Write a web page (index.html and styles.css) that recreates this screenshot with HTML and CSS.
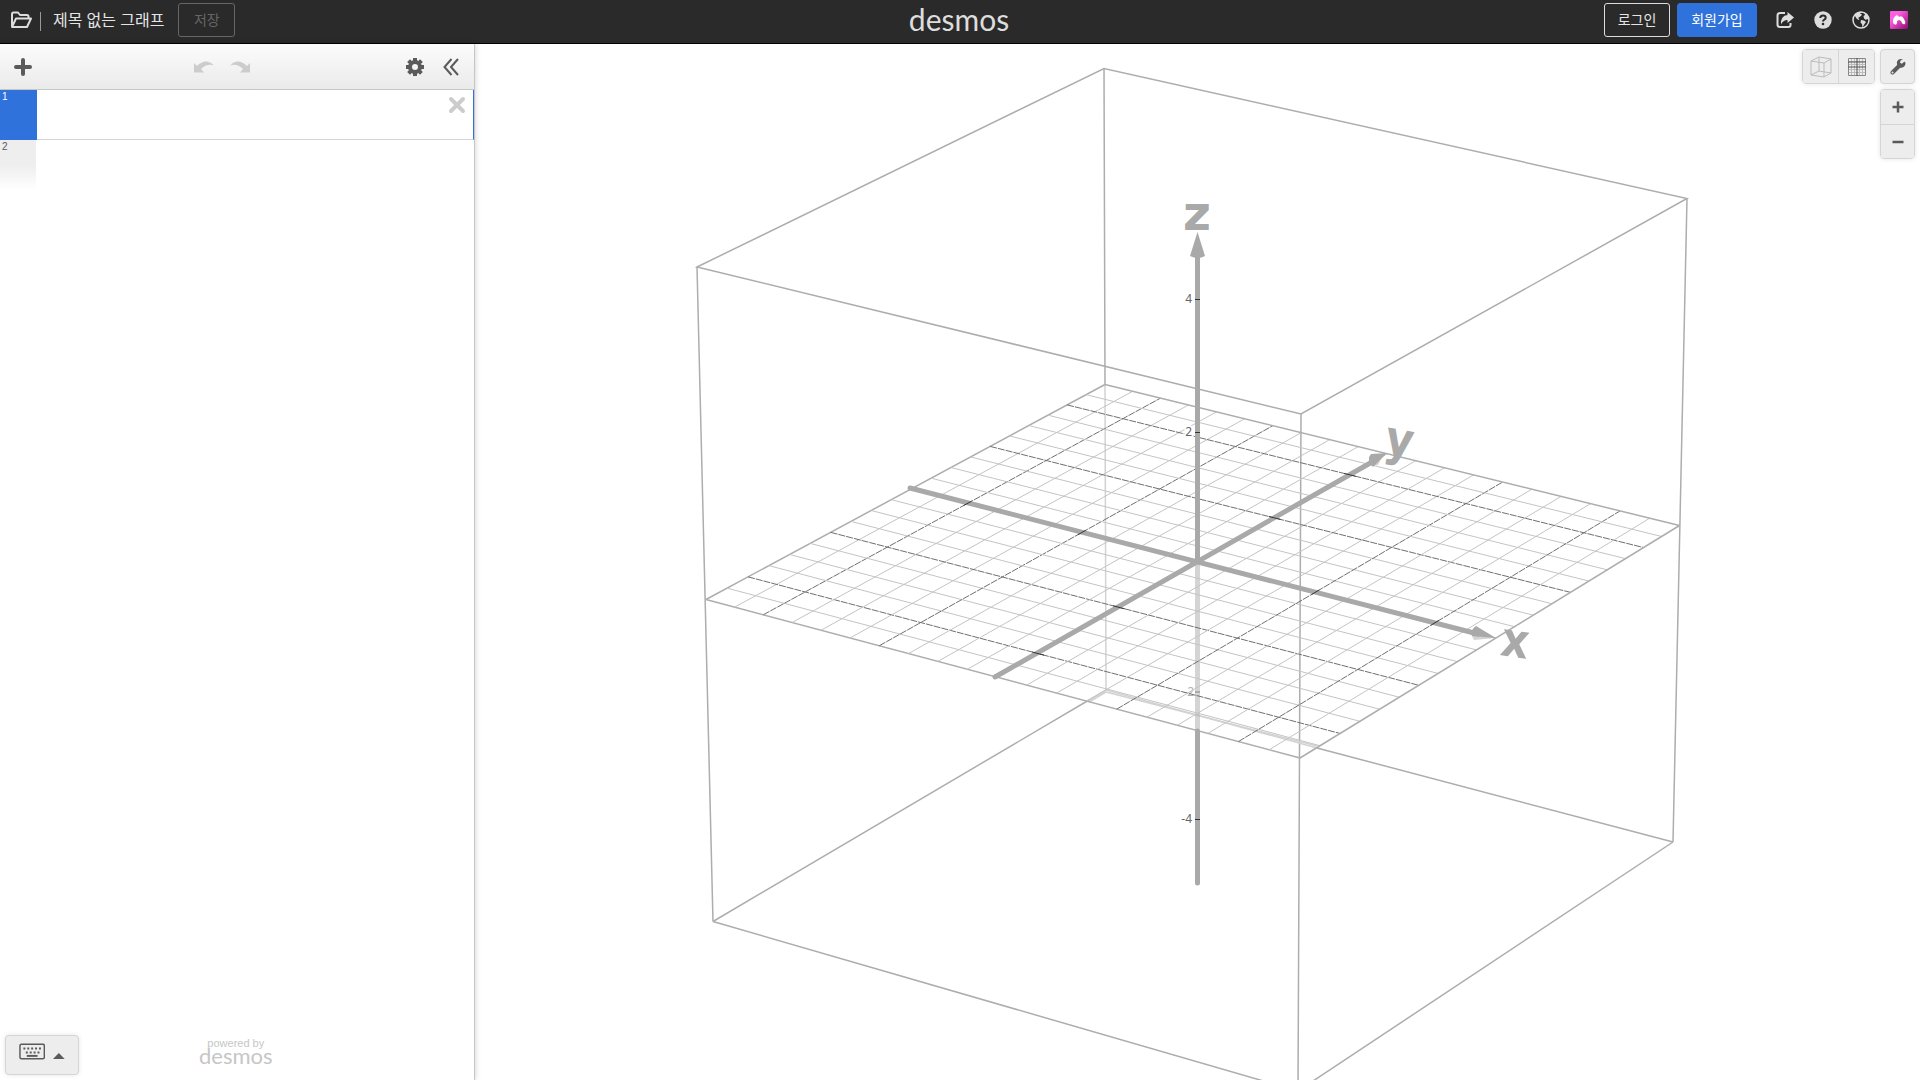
FILE: index.html
```
<!DOCTYPE html>
<html lang="ko">
<head>
    <meta charset="utf-8">
    <meta name="viewport" content="width=device-width, initial-scale=1">
    <title>Desmos | 3D</title>
    <link rel="stylesheet" href="styles.css">
</head>
<body>
    <header class="header">
        <div class="header-side">
            <button class="icon-btn open-btn" aria-label="그래프 열기">
                <svg width="22" height="18" viewBox="0 0 22 18" fill="none" stroke="#ddd" stroke-width="2" stroke-linejoin="round">
                    <path d="M2 15V3q0-1.500 1.500-1.500H8L10 4h7q1.500 0 1.500 1.500V7"/>
                    <path d="M2 16L6 7.500h15L17 16z"/>
                </svg>
            </button>
            <span class="divider"></span>
            <span class="graph-title">제목 없는 그래프</span>
            <button class="btn save-btn" disabled>저장</button>
        </div>
        <a class="logo" href="#">desmos</a>
        <div class="header-side header-right">
            <button class="btn login-btn">로그인</button>
            <button class="btn signup-btn">회원가입</button>
            <div class="header-icons">
                <button class="icon-btn" aria-label="공유">
                    <svg width="18" height="18" viewBox="0 0 18 18">
                        <path d="M9 2H4Q1.500 2 1.500 4.500v9Q1.500 16 4 16h8.500q2 0 2-2v-2" fill="none" stroke="#ddd" stroke-width="2"/>
                        <path d="M11.500 1L18 6.500 11.500 12V9Q7 9 5 13.500 4.500 4.500 11.500 4z" fill="#ddd"/>
                    </svg>
                </button>
                <button class="icon-btn" aria-label="도움말">
                    <svg width="18" height="18" viewBox="0 0 18 18">
                        <circle cx="9" cy="9" r="8.700" fill="#ddd"/>
                        <path d="M6.300 7q0-2.600 2.700-2.600T11.700 6.700Q11.700 8 10.300 8.700 9 9.300 9 10.600" fill="none" stroke="#2a2a2a" stroke-width="2"/>
                        <circle cx="9" cy="13" r="1.300" fill="#2a2a2a"/>
                    </svg>
                </button>
                <button class="icon-btn" aria-label="언어">
                    <svg width="18" height="18" viewBox="0 0 18 18">
                        <circle cx="9" cy="9" r="8" fill="none" stroke="#ddd" stroke-width="1.500"/>
                        <path d="M3 3Q6 0 10 1L8 2.500l2 1L9 5 7.500 6 6 7l1.500 1.200L6.500 9 4.500 7.500 3 5zM12 1l3.500 3 1.500 5-2-1-1 1-2-1.500L11.500 5l1.500-1zM9 9l3 .5 2 1.500-1.500 2-2 3.500L10 13 8.500 11.500z" fill="#ddd"/>
                    </svg>
                </button>
                <button class="icon-btn" aria-label="계정">
                    <svg width="18" height="18" viewBox="0 0 18 18">
                        <defs>
                            <linearGradient id="pink" x1="0" y1="0" x2="1" y2="1">
                                <stop offset="0.300" stop-color="#ff5ee0"/>
                                <stop offset="1" stop-color="#8c0a70"/>
                            </linearGradient>
                        </defs>
                        <rect width="18" height="18" rx="1" fill="url(#pink)"/>
                        <path d="M3.500 13Q2 8 5 5.500 7.500 3 9 6q3-2 5 2 2 3 1 5-2 1-3-1l-1-2-2-1-2 1v2q-1 3-3.500.5z" fill="#fff"/>
                    </svg>
                </button>
            </div>
        </div>
    </header>
    <main class="main">
        <aside class="sidebar">
            <div class="toolbar">
                <button class="icon-btn" aria-label="추가">
                    <svg width="18" height="18" viewBox="0 0 18 18" stroke="#5a5a5a" stroke-width="4" stroke-linecap="round">
                        <path d="M9 2v14M2 9h14"/>
                    </svg>
                </button>
                <div class="history">
                    <button class="icon-btn" aria-label="실행 취소" disabled>
                        <svg width="20" height="12" viewBox="0 0 20 12" fill="#ccc">
                            <path d="M0 2l3 3Q8 0 13 .5q4 .5 7 4Q13 2 7 8l3 3.500H0z"/>
                        </svg>
                    </button>
                    <button class="icon-btn" aria-label="다시 실행" disabled>
                        <svg width="20" height="12" viewBox="0 0 20 12" fill="#ccc">
                            <path d="M20 2l-3 3Q12 0 7 .5q-4 .5-7 4Q7 2 13 8l-3 3.500h10z"/>
                        </svg>
                    </button>
                </div>
                <div class="toolbar-right">
                    <button class="icon-btn" aria-label="설정">
                        <svg width="18" height="18" viewBox="0 0 18 18" fill="none" stroke="#5a5a5a">
                            <circle cx="9" cy="9" r="5" stroke-width="4"/>
                            <path d="M9 0v3M9 15v3M0 9h3M15 9h3M2.600 2.600l2 2M13.400 13.400l2 2M2.600 15.400l2-2M13.400 4.600l2-2" stroke-width="4"/>
                        </svg>
                    </button>
                    <button class="icon-btn" aria-label="목록 숨기기">
                        <svg width="16" height="18" viewBox="0 0 16 18" fill="none" stroke="#5a5a5a" stroke-width="2">
                            <path d="M8.500 1L1.500 9l7 8M15 1L8 9l7 8"/>
                        </svg>
                    </button>
                </div>
            </div>
            <div class="expression active">
                <label class="expression-tab" for="expression-1">1</label>
                <input class="expression-input" id="expression-1" type="text">
                <button class="icon-btn delete-btn" aria-label="삭제">
                    <svg width="18" height="18" viewBox="0 0 18 18" stroke="#ccc" stroke-width="4" stroke-linecap="round">
                        <path d="M3 3l12 12M15 3L3 15"/>
                    </svg>
                </button>
            </div>
            <div class="expression next">
                <span class="expression-tab">2</span>
            </div>
            <div class="sidebar-bottom">
                <button class="keypad-btn" aria-label="키패드 열기">
                    <svg width="27" height="18" viewBox="0 0 27 18" fill="none" stroke="#5a5a5a">
                        <rect x="1" y="1" width="25" height="15" rx="1.500" stroke-width="1.500"/>
                        <path d="M4.500 5.500h19M7 9.500h14" stroke-width="2" stroke-dasharray="2 2"/>
                        <path d="M8 13h11" stroke-width="2"/>
                    </svg>
                    <svg class="caret" width="12" height="6" viewBox="0 0 12 6" fill="#5a5a5a"><path d="M0 6l6-6 6 6z"/></svg>
                </button>
                <div class="powered-by">
                    <span>powered by</span>
                    <span class="powered-logo">desmos</span>
                </div>
            </div>
        </aside>
        <section class="graph">
            <svg class="scene" id="scene" viewBox="475 44 1445 1036" preserveAspectRatio="xMidYMid slice">
                <g class="box-edge">
                    <path d="M697 267L1104 68.500 1687 198.500 1301 414z"/>
                    <path d="M697 267L713 921.500M1687 198.500L1673 842M1301 414L1298 1091M1104 68.500L1105 384"/>
                    <path d="M713 921.500L1298 1091 1673 842"/>
                    <path d="M713 921.500L1089 700M1317 748L1673 842"/>
                </g>
                <g class="box-edge hidden-edge">
                    <path d="M1105 384L1106 690"/>
                    <path d="M1089 700L1106 690 1317 748M1089 702L1106 692"/>
                    <path d="M1106 692L1317 746"/>
                </g>
                <path class="axis axis-hidden" d="M1197.500 561V731"/>
                <path class="tick axis-hidden" d="M1195 692h5"/>
                <text class="tick-label axis-hidden" x="1194" y="696" text-anchor="end">-2</text>
                <g id="grid"></g>
                <g class="axis-shade">
                    <path d="M1481 634l14 4-21 2-3-6zM1370 459l12-2-4 8-8 0z"/>
                </g>
                <path class="axis" d="M910 488L1478 634M995 677L1372 462M1197.500 256V561M1197.500 731V883"/>
                <path class="arrow" d="M1197.500 232L1205 256Q1198 260 1190 256zM1496 638L1476 626Q1470 630 1472 636zM1387 453L1371 454Q1366 460 1373 467z"/>
                <g id="ticks"></g>
                <path class="tick" d="M1195 299.500h5M1195 432.500h5M1195 819.500h5"/>
                <g class="tick-label" text-anchor="end">
                    <text x="1192" y="303">4</text>
                    <text class="haloed" x="1192" y="436">2</text>
                    <text x="1192" y="823">-4</text>
                </g>
                <g class="axis-name" text-anchor="middle">
                    <text x="1197" y="230">z</text>
                    <text class="slim" x="1399" y="456" transform="rotate(10 1399 444)">y</text>
                    <text class="slim" x="1515" y="657" transform="rotate(8 1515 643)">x</text>
                </g>
            </svg>
            <div class="graph-controls">
                <div class="view-toggle">
                    <button class="control" aria-label="3D 보기">
                        <svg width="22" height="22" viewBox="0 0 22 22" fill="none" stroke="#bbb">
                            <path d="M1 5L14 7 21 3 9 1zM1 5v14l13 2V7M14 21l7-4V3M9 1v14L1 19M9 15l12 2"/>
                        </svg>
                    </button>
                    <button class="control" aria-label="xy 평면 보기">
                        <svg width="18" height="18" viewBox="0 0 18 18" fill="none">
                            <path d="M3.500 0v18M6.500 0v18M11.500 0v18M14.500 0v18M0 3.500h18M0 6.500h18M0 11.500h18M0 14.500h18" stroke="#bbb"/>
                            <path d="M.5.5h17v17H.5z" stroke="#888"/>
                            <path d="M9 0v18M0 9h18M0 4h18" stroke="#555"/>
                        </svg>
                    </button>
                </div>
                <div class="control-column">
                    <button class="control single" aria-label="그래프 설정">
                        <svg width="16" height="16" viewBox="0 0 16 16">
                            <path d="M2.500 13.500L10 6" stroke="#5a5a5a" stroke-width="4" stroke-linecap="round"/>
                            <path d="M14.500 2.500L11.500 5 10 4 10.500 1.500 13 .5Q9 -1 7 2.500 6.500 5 8 7.500 10 9.500 12.500 8.500 15.500 7 15.500 4z" fill="#5a5a5a"/>
                            <circle cx="2.500" cy="13.500" r="1" fill="#ededed"/>
                        </svg>
                    </button>
                    <div class="zoom">
                        <button class="control" aria-label="확대">
                            <svg width="12" height="12" viewBox="0 0 12 12" stroke="#5a5a5a" stroke-width="2.500"><path d="M6 .5v11M.5 6h11"/></svg>
                        </button>
                        <button class="control" aria-label="축소">
                            <svg width="12" height="12" viewBox="0 0 12 12" stroke="#5a5a5a" stroke-width="2.500"><path d="M.5 6h11"/></svg>
                        </button>
                    </div>
                </div>
            </div>
        </section>
    </main>
    <script src="grid.js"></script>
</body>
</html>
```
FILE: styles.css
```
* {
    box-sizing: border-box;
}

body {
    margin: 0;
    height: 100vh;
    display: flex;
    flex-direction: column;
    overflow: hidden;
    background: #ffffff;
    font-family: "Noto Sans", "Noto Sans CJK KR", sans-serif;
    color: #5a5a5a;
}

button {
    font-family: inherit;
    cursor: pointer;
}

button:disabled {
    cursor: default;
}

svg {
    display: block;
}

.icon-btn {
    padding: 0;
    border: none;
    background: none;
}

.header {
    display: flex;
    align-items: center;
    height: 44px;
    flex-shrink: 0;
    padding: 0 12px 4px 10px;
    background: #2a2a2a;
    border-bottom: 1px solid #000000;
    color: #e5e5e5;
}

.header-side {
    flex: 1;
    display: flex;
    align-items: center;
}

.header-right {
    justify-content: flex-end;
}

.divider {
    width: 1px;
    height: 19px;
    margin: 4px 12px 0 8px;
    background: #999999;
}

.graph-title {
    font-size: 16px;
    line-height: 20px;
    margin-right: 14px;
}

.btn {
    height: 34px;
    border-radius: 3px;
    font-size: 14px;
    line-height: 20px;
    padding: 0 12px;
}

.save-btn {
    width: 57px;
    background: none;
    border: 1px solid #666666;
    color: #666666;
}

.login-btn {
    width: 66px;
    background: none;
    border: 1px solid #dddddd;
    color: #e5e5e5;
}

.signup-btn {
    width: 80px;
    margin-left: 7px;
    background: #2f72dc;
    border: 1px solid #2f72dc;
    color: #ffffff;
}

.header-icons {
    display: flex;
    gap: 20px;
    margin-left: 19px;
}

.logo {
    font-family: Lato, sans-serif;
    font-size: 30px;
    line-height: 34px;
    padding-bottom: 2px;
    color: #dddddd;
    text-decoration: none;
}

.main {
    flex: 1;
    display: flex;
    min-height: 0;
}

.sidebar {
    width: 475px;
    flex-shrink: 0;
    display: flex;
    flex-direction: column;
    border-right: 1px solid #c6c6c6;
    box-shadow: 0 0 6px rgba(0, 0, 0, 0.2);
    z-index: 1;
}

.toolbar {
    display: flex;
    align-items: center;
    justify-content: space-between;
    height: 46px;
    padding: 0 15px 0 14px;
    background: linear-gradient(#fcfcfc, #eaeaea);
    border-bottom: 1px solid #c6c6c6;
}

.history {
    display: flex;
    gap: 16px;
    margin-left: 5px;
}

.toolbar-right {
    display: flex;
    gap: 19px;
}

.expression {
    display: flex;
    height: 50px;
    border-bottom: 1px solid #d5d5d5;
}

.expression-tab {
    width: 37px;
    padding: 1px 2px;
    font-family: "Liberation Sans", Arial, sans-serif;
    font-size: 10px;
    line-height: 12px;
}

.active {
    border-right: 1px solid #2f72dc;
}

.active .expression-tab {
    height: 50px;
    background: #2f72dc;
    color: #ffffff;
}

.next {
    border-bottom: none;
}

.next .expression-tab {
    width: 36px;
    background: linear-gradient(#eeeeee 50%, #ffffff);
}

.expression-input {
    flex: 1;
    min-width: 0;
    border: none;
    outline: none;
    background: none;
    padding: 0 12px;
    font-size: 18px;
}

.delete-btn {
    align-self: flex-start;
    padding: 6px 7px;
}

.sidebar-bottom {
    display: flex;
    align-items: flex-end;
    margin-top: auto;
    padding: 0 5px 5px;
}

.keypad-btn {
    display: flex;
    align-items: center;
    gap: 8px;
    width: 74px;
    height: 40px;
    padding: 0 13px 6px;
    background: #ededed;
    border: 1px solid #d5d5d5;
    border-radius: 4px;
    box-shadow: 0 0 5px rgba(0, 0, 0, 0.1);
}

.caret {
    margin-top: 7px;
}

.powered-by {
    display: flex;
    flex-direction: column;
    align-items: center;
    margin-left: 120px;
    padding-bottom: 12px;
    font-family: "Liberation Sans", Arial, sans-serif;
    font-size: 11px;
    line-height: 12px;
    color: #c6c6c6;
}

.powered-logo {
    font-family: Lato, sans-serif;
    font-size: 22px;
    line-height: 14px;
}

.graph {
    flex: 1;
    position: relative;
    min-width: 0;
}

.scene {
    width: 100%;
    height: 100%;
}

.box-edge {
    fill: none;
    stroke: #adadad;
    stroke-width: 1.5;
}

.hidden-edge {
    stroke: #d2d2d2;
}

.grid-minor {
    stroke: #c4c4c4;
}

.grid-major {
    stroke: #707070;
    stroke-dasharray: 7 1;
}

.axis {
    fill: none;
    stroke: #a9a9a9;
    stroke-width: 5;
    stroke-linecap: round;
}

.axis-hidden {
    opacity: 0.5;
}

.axis.axis-hidden {
    stroke-linecap: butt;
}

.axis-shade {
    fill: #d2d2d2;
}

.arrow {
    fill: #a9a9a9;
}

.tick {
    stroke: #333333;
    stroke-width: 1;
}

.tick-label {
    fill: #666666;
    font-size: 12px;
}

.haloed {
    stroke: #ffffff;
    stroke-width: 4;
    paint-order: stroke;
}

.axis-name {
    fill: #a9a9a9;
    font-family: "DejaVu Sans", sans-serif;
    font-size: 48px;
    font-weight: bold;
}

.slim {
    font-family: "Liberation Sans Narrow", "DejaVu Sans Condensed", sans-serif;
}

.graph-controls {
    position: absolute;
    top: 5px;
    right: 5px;
    display: flex;
    align-items: flex-start;
    gap: 5px;
}

.control {
    display: flex;
    align-items: center;
    justify-content: center;
    width: 35px;
    height: 33px;
    padding: 0;
    border: none;
    background: #ededed;
}

.view-toggle,
.zoom,
.single {
    border: 1px solid #d5d5d5;
    border-radius: 4px;
    overflow: hidden;
    box-shadow: 0 0 5px rgba(0, 0, 0, 0.1);
}

.view-toggle {
    display: flex;
}

.view-toggle .control + .control {
    width: 36px;
    border-left: 1px solid #d5d5d5;
}

.control-column {
    display: flex;
    flex-direction: column;
    gap: 5px;
    width: 35px;
}

.control-column .control {
    width: 100%;
}

.control-column .single {
    height: 35px;
}

.zoom .control {
    height: 34px;
}

.zoom .control + .control {
    border-top: 1px solid #d5d5d5;
}
```
FILE: grid.js
```
const SVG_NS = 'http://www.w3.org/2000/svg';

// screen corners of the xy plane: (-5,-5), (5,-5), (5,5), (-5,5)
const corners = [[706, 599.5], [1300, 758], [1679.5, 525.5], [1105, 384.5]];

function makeProjection([p0, p1, p2, p3]) {
    const dx1 = p1[0] - p2[0], dx2 = p3[0] - p2[0], dx3 = p0[0] - p1[0] + p2[0] - p3[0];
    const dy1 = p1[1] - p2[1], dy2 = p3[1] - p2[1], dy3 = p0[1] - p1[1] + p2[1] - p3[1];
    const det = dx1 * dy2 - dx2 * dy1;
    const g = (dx3 * dy2 - dx2 * dy3) / det;
    const h = (dx1 * dy3 - dx3 * dy1) / det;
    return (x, y) => {
        const u = (x + 5) / 10;
        const v = (y + 5) / 10;
        const w = g * u + h * v + 1;
        return [
            ((p1[0] - p0[0] + g * p1[0]) * u + (p3[0] - p0[0] + h * p3[0]) * v + p0[0]) / w,
            ((p1[1] - p0[1] + g * p1[1]) * u + (p3[1] - p0[1] + h * p3[1]) * v + p0[1]) / w
        ];
    };
}

const project = makeProjection(corners);

function drawLine(parent, className, from, to) {
    const line = document.createElementNS(SVG_NS, 'line');
    line.setAttribute('class', className);
    line.setAttribute('x1', from[0]);
    line.setAttribute('y1', from[1]);
    line.setAttribute('x2', to[0]);
    line.setAttribute('y2', to[1]);
    parent.appendChild(line);
}

function drawGrid() {
    const grid = document.getElementById('grid');
    const ticks = document.getElementById('ticks');

    for (let i = -10; i <= 10; i++) {
        const n = i / 2;
        let className = 'grid-minor';
        if (Math.abs(i) === 10) {
            className = 'box-edge';
        } else if (n % 2 === 0) {
            className = 'grid-major';
        }
        drawLine(grid, className, project(n, -5), project(n, 5));
        drawLine(grid, className, project(-5, n), project(5, n));
    }

    [-4, -2, 2, 4].forEach(n => {
        drawLine(ticks, 'tick', project(n, -0.1), project(n, 0.1));
        drawLine(ticks, 'tick', project(-0.1, n), project(0.1, n));
    });
}

drawGrid();
```
